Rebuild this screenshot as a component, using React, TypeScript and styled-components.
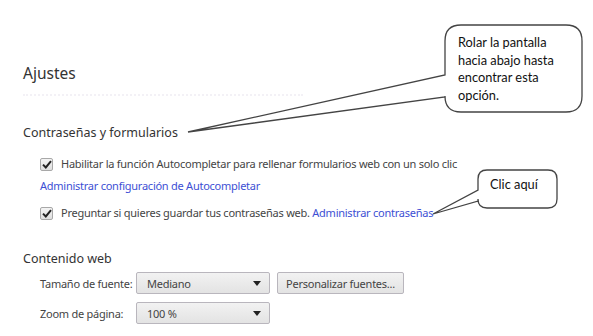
import styled, { createGlobalStyle } from "styled-components";

const Global = createGlobalStyle`
  html, body {
    margin: 0;
    padding: 0;
    background: #fff;
  }
  body {
    font-family: "Noto Sans", "Open Sans", sans-serif;
  }
`;

const Page = styled.div`
  position: relative;
  width: 593px;
  height: 336px;
  overflow: hidden;
  padding: 62px 0 0 23px;
  box-sizing: border-box;
  color: #444;
  font-size: 11px;
  letter-spacing: -0.25px;
`;

const Title = styled.h1`
  margin: 0;
  font-weight: 400;
  font-size: 15.5px;
  line-height: 22px;
  letter-spacing: 0;
  color: #333;
`;

const Faded = styled.div`
  width: 280px;
  height: 0;
  margin-top: 10px;
  border-top: 2px dotted #f3f1f6;
`;

const SectionTitle = styled.h2<{ $top: number }>`
  margin: ${(p) => p.$top}px 0 0 0;
  font-weight: 400;
  font-size: 12.5px;
  line-height: 18px;
  letter-spacing: 0;
  color: #333;
`;

const Block = styled.div`
  padding-left: 17px;
`;

const CheckRow = styled.label<{ $top: number }>`
  display: flex;
  align-items: center;
  gap: 8px;
  margin-top: ${(p) => p.$top}px;
  line-height: 16px;
  white-space: nowrap;
`;

const Box = styled.span`
  width: 11px;
  height: 11px;
  border: 1px solid #a8a8a8;
  border-radius: 2px;
  background: linear-gradient(#f4f4f4, #dedede);
  display: flex;
  align-items: center;
  justify-content: center;
  flex-shrink: 0;
`;

const Link = styled.a<{ $top?: number }>`
  display: ${(p) => (p.$top !== undefined ? "block" : "inline")};
  margin-top: ${(p) => p.$top ?? 0}px;
  color: #3d4fd4;
  text-decoration: none;
  line-height: 16px;
`;

const FieldRow = styled.div<{ $top: number }>`
  display: flex;
  align-items: center;
  margin-top: ${(p) => p.$top}px;
  height: 22px;
  white-space: nowrap;
`;

const Label = styled.span`
  width: 96px;
  flex-shrink: 0;
`;

const Select = styled.div`
  width: 134px;
  height: 22px;
  box-sizing: border-box;
  border: 1px solid #b9b6bd;
  border-radius: 2px;
  background: linear-gradient(#f2f2f2, #e3e3e3);
  display: flex;
  align-items: center;
  justify-content: space-between;
  padding: 0 8px 0 10px;
  color: #444;
`;

const Button = styled.div`
  margin-left: 7px;
  width: 127px;
  height: 22px;
  box-sizing: border-box;
  border: 1px solid #b9b6bd;
  border-radius: 2px;
  background: linear-gradient(#f2f2f2, #e3e3e3);
  display: flex;
  align-items: center;
  justify-content: center;
  color: #444;
`;

const Overlay = styled.svg`
  position: absolute;
  left: 0;
  top: 0;
  pointer-events: none;
`;

const Note = styled.div<{ $x: number; $y: number }>`
  position: absolute;
  left: ${(p) => p.$x}px;
  top: ${(p) => p.$y}px;
  font-family: Lato, "Open Sans", sans-serif;
  font-size: 12.8px;
  line-height: 17.5px;
  letter-spacing: 0;
  color: #111;
`;

function Check() {
  return (
    <Box>
      <svg width="10" height="9" viewBox="0 0 10 9">
        <path d="M1 4.6 L3.8 7.4 L9 1.2" fill="none" stroke="#222" strokeWidth="2" />
      </svg>
    </Box>
  );
}

function Arrow() {
  return (
    <svg width="8" height="5" viewBox="0 0 8 5">
      <path d="M0 0 H8 L4 5 Z" fill="#222" />
    </svg>
  );
}

// outline of a rounded speech bubble with a tail on the left side
function bubble(x1: number, y1: number, x2: number, y2: number, r: number, a1: number, a2: number, tx: number, ty: number) {
  return [
    `M${x1 + r} ${y1}`,
    `H${x2 - r}`,
    `Q${x2} ${y1} ${x2} ${y1 + r}`,
    `V${y2 - r}`,
    `Q${x2} ${y2} ${x2 - r} ${y2}`,
    `H${x1 + r}`,
    `Q${x1} ${y2} ${x1} ${y2 - r}`,
    `V${a2}`,
    `L${tx} ${ty}`,
    `L${x1} ${a1}`,
    `V${y1 + r}`,
    `Q${x1} ${y1} ${x1 + r} ${y1}`,
    "Z",
  ].join(" ");
}

export default function App() {
  return (
    <Page>
      <Global />
      <Title>Ajustes</Title>
      <Faded />

      <SectionTitle $top={28}>Contraseñas y formularios</SectionTitle>
      <Block>
        <CheckRow $top={14}>
          <Check />
          Habilitar la función Autocompletar para rellenar formularios web con un solo clic
        </CheckRow>
        <Link $top={6}>Administrar configuración de Autocompletar</Link>
        <CheckRow $top={11}>
          <Check />
          <span>
            Preguntar si quieres guardar tus contraseñas web. <Link>Administrar contraseñas</Link>
          </span>
        </CheckRow>
      </Block>

      <SectionTitle $top={29}>Contenido web</SectionTitle>
      <Block>
        <FieldRow $top={4}>
          <Label>Tamaño de fuente:</Label>
          <Select>
            Mediano
            <Arrow />
          </Select>
          <Button>Personalizar fuentes...</Button>
        </FieldRow>
        <FieldRow $top={8}>
          <Label>Zoom de página:</Label>
          <Select>
            100 %
            <Arrow />
          </Select>
        </FieldRow>
      </Block>

      <Overlay width="593" height="336">
        <path
          d={bubble(445, 25, 582, 112, 16, 75, 97, 188, 132)}
          fill="#fff"
          stroke="#444"
          strokeWidth="1.3"
        />
        <path
          d={bubble(478, 170, 557, 208, 9, 190, 201, 433, 214)}
          fill="#fff"
          stroke="#444"
          strokeWidth="1.3"
        />
      </Overlay>
      <Note $x={458} $y={34}>
        Rolar la pantalla
        <br />
        hacia abajo hasta
        <br />
        encontrar esta
        <br />
        opción.
      </Note>
      <Note $x={490} $y={176}>Clic aquí</Note>
    </Page>
  );
}
